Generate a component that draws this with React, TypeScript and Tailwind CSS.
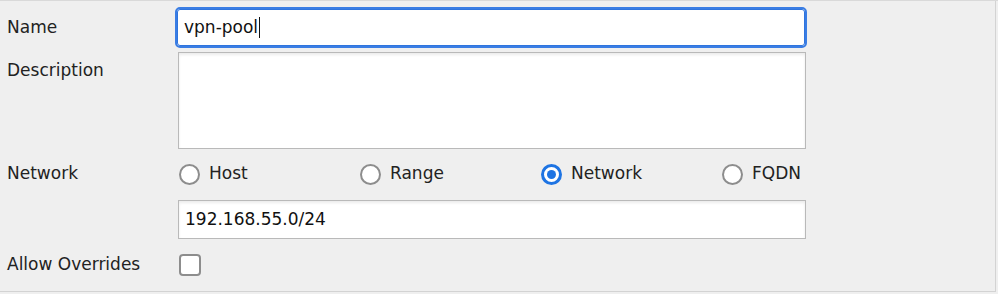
import React from 'react';

const font = { fontFamily: '"DejaVu Sans", Verdana, sans-serif' };

type RadioProps = { label: string; checked?: boolean };

const Radio: React.FC<RadioProps> = ({ label, checked }) => (
  <label className="flex items-center gap-[9px] cursor-pointer">
    {checked ? (
      <span className="w-[21px] h-[21px] rounded-full border-[3px] border-[#1e74e3] bg-white flex items-center justify-center">
        <span className="w-[9px] h-[9px] rounded-full bg-[#1e74e3]" />
      </span>
    ) : (
      <span className="w-[21px] h-[21px] rounded-full border-[2.5px] border-[#8d8d8d] bg-white" />
    )}
    <span className="text-[17px] text-[#222]">{label}</span>
  </label>
);

export default function App() {
  return (
    <div
      style={font}
      className="w-[998px] h-[294px] bg-[#efefef] border-t border-t-[#d9d9d9] overflow-hidden"
    >
      <div className="w-[996px] h-[291px] border-r border-b border-[#d3d3d3] flex flex-col">
        {/* Name */}
        <div className="flex items-center mt-[7px] h-[39px]">
          <div className="w-[178px] pl-[7px] text-[17px] text-[#222]">Name</div>
          <div className="w-[628px] h-[37px] -ml-px border border-[#2f74dd] rounded-[3px] outline-2 outline-[#3a7de4] bg-white flex items-center pl-[6px] text-[17px] text-[#111]">
            <span>vpn-pool</span>
            <span className="w-px h-[21px] bg-[#111] ml-px" />
          </div>
        </div>

        {/* Description */}
        <div className="flex mt-[5px]">
          <div className="w-[178px] pl-[7px] pt-[6px] text-[17px] text-[#222]">Description</div>
          <div className="w-[628px] h-[97px] border border-[#b9b9b9] bg-white shadow-[inset_0_2px_3px_rgba(0,0,0,0.08)]" />
        </div>

        {/* Network type */}
        <div className="flex items-center mt-[10px] h-[30px]">
          <div className="w-[178px] pl-[7px] text-[17px] text-[#222]">Network</div>
          <div className="grid grid-cols-[181px_181px_181px_90px] pl-px">
            <Radio label="Host" />
            <Radio label="Range" />
            <Radio label="Network" checked />
            <Radio label="FQDN" />
          </div>
        </div>

        {/* Network value */}
        <div className="flex mt-[11px]">
          <div className="w-[178px]" />
          <div className="w-[628px] h-[39px] border border-[#b9b9b9] bg-white shadow-[inset_0_2px_3px_rgba(0,0,0,0.08)] flex items-center pl-[6px] text-[17px] text-[#111]">
            192.168.55.0/24
          </div>
        </div>

        {/* Allow overrides */}
        <div className="flex items-center mt-[11px] h-[30px]">
          <div className="w-[178px] pl-[7px] text-[17px] text-[#222]">Allow Overrides</div>
          <span className="ml-px w-[22px] h-[22px] rounded-[4px] border-2 border-[#8d8d8d] bg-white" />
        </div>
      </div>
    </div>
  );
}
